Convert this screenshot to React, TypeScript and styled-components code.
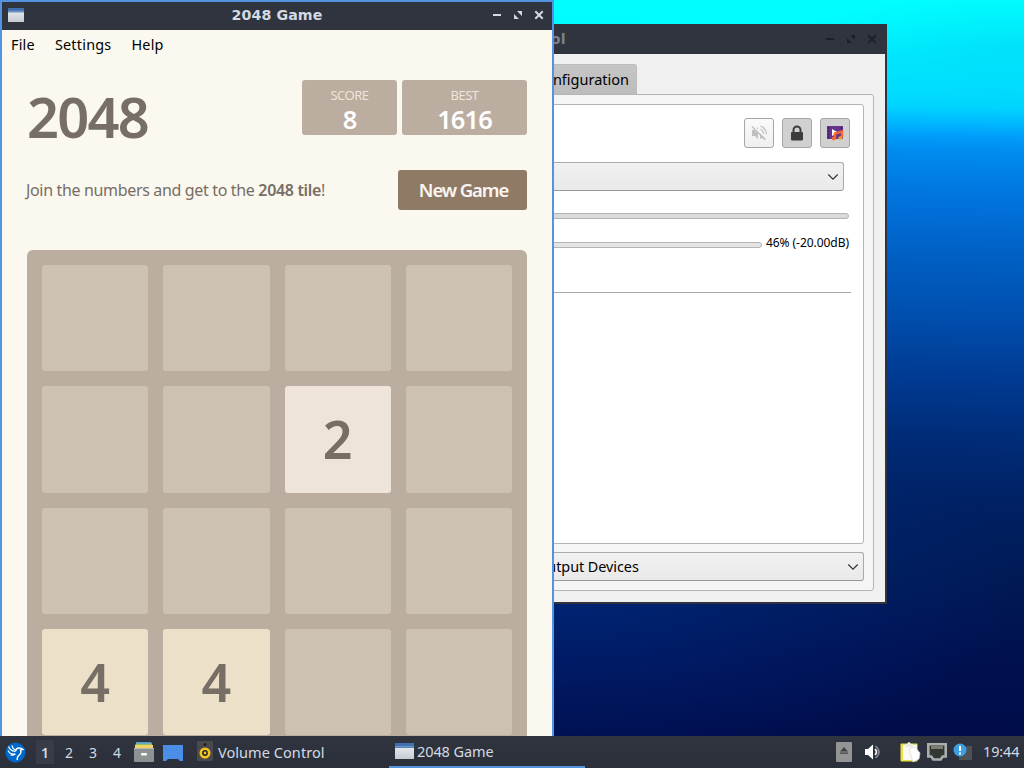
import styled, {createGlobalStyle} from "styled-components";

const GlobalStyle = createGlobalStyle`
    * {
        box-sizing: border-box;
    }

    body {
        margin: 0;
        overflow: hidden;
        font-family: "Noto Sans", "Open Sans", sans-serif;
    }
`;

const Screen = styled.div`
    width: 1024px;
    height: 768px;
    display: flex;
    flex-direction: column;
`;

const Desktop = styled.main`
    position: relative;
    flex: 1;
    min-height: 0;
    overflow: hidden;
    background:
        radial-gradient(ellipse 460px 190px at 560px 590px, rgba(0, 52, 150, 0.5), transparent),
        radial-gradient(ellipse 260px 60px at 1040px 50px, rgba(0, 205, 245, 0.5), transparent),
        linear-gradient(181deg, #00ffff 0, #00fcff 30px, #00eeff 56px, #00e2ff 84px, #00d4ff 108px, #00b8ff 124px,
            #009cfa 138px, #008cf0 152px, #0078e0 190px, #006cd4 222px, #0060c4 256px, #0050b0 312px, #003c94 374px,
            #002c78 438px, #002062 508px, #001a56 576px, #001050 660px, #000c4a 740px);
`;

const Window = styled.section<{$left: number, $top: number, $width: number, $height: number, $active?: boolean}>`
    position: absolute;
    left: ${({$left}) => $left}px;
    top: ${({$top}) => $top}px;
    width: ${({$width}) => $width}px;
    height: ${({$height}) => $height}px;
    display: flex;
    flex-direction: column;
    border: 2px solid ${({$active}) => $active ? "#5294e2" : "#2f343f"};
    background: ${({$active}) => $active ? "#faf8ef" : "#f0f0f0"};
`;

const TitleBar = styled.header<{$active?: boolean}>`
    flex: none;
    height: 28px;
    padding: 0 8px 2px 6px;
    display: grid;
    grid-template-columns: 60px 1fr 60px;
    align-items: center;
    background: #2f343f;
    color: ${({$active}) => $active ? "#d3dae3" : "#7c818c"};
`;

const Title = styled.h1`
    margin: 0;
    padding-left: 2px;
    text-align: center;
    font: bold 14.2px/26px "DejaVu Sans", sans-serif;
    letter-spacing: 0.1px;
    white-space: nowrap;
`;

const WindowButtons = styled.div`
    display: flex;
    justify-content: flex-end;
    gap: 11px;
`;

const MenuBar = styled.nav`
    display: flex;
    gap: 20px;
    height: 30px;
    padding-left: 9px;
    font-size: 14.4px;
    line-height: 30px;
    letter-spacing: 0.22px;
    color: #000;
`;

const Game = styled.div`
    padding: 20px 25px 0;
    color: #776e65;
`;

const Heading = styled.div`
    display: flex;
    justify-content: space-between;
    height: 90px;
`;

const Logo = styled.h2`
    margin: 0;
    font-size: 56px;
    font-weight: 600;
    line-height: 72px;
    letter-spacing: -1.8px;
`;

const Scores = styled.div`
    display: flex;
    align-items: flex-start;
    gap: 5px;
`;

const ScoreBox = styled.div<{$width: number}>`
    width: ${({$width}) => $width}px;
    height: 55px;
    padding-top: 7px;
    border-radius: 3px;
    background: #bbada0;
    text-align: center;
`;

const ScoreLabel = styled.div`
    color: #eee4da;
    font-size: 13px;
    line-height: 16px;
    letter-spacing: -0.5px;
`;

const ScoreValue = styled.div`
    color: #fff;
    font-size: 25.5px;
    font-weight: 600;
    line-height: 32px;
    letter-spacing: -0.9px;
`;

const Intro = styled.div`
    display: flex;
    justify-content: space-between;
    height: 80px;
    font-size: 16px;
    line-height: 40px;
    letter-spacing: -0.34px;

    p {
        margin: 0 0 0 -1px;
    }

    b {
        font-weight: 600;
    }
`;

const NewGame = styled.button`
    width: 129px;
    height: 40px;
    padding: 0 0 0 2px;
    border: 0;
    border-radius: 3px;
    background: #8f7a66;
    color: #f9f6f2;
    font: 600 18.5px/40px "Noto Sans", sans-serif;
    letter-spacing: -1.1px;
`;

const Board = styled.div`
    display: grid;
    grid-template-columns: repeat(4, 106.25px);
    grid-auto-rows: 106.25px;
    gap: 15px;
    width: 500px;
    height: 500px;
    padding: 15px;
    border-radius: 6px;
    background: #bbada0;
`;

const tileColors: Record<number, string> = {
    0: "#cdc1b4",
    2: "#eee4da",
    4: "#ede0c8",
};

const Tile = styled.div<{$value: number}>`
    border-radius: 3px;
    background: ${({$value}) => tileColors[$value]};
    font-size: 52px;
    font-weight: 600;
    line-height: 105px;
    text-align: center;
`;

const Mixer = styled.div`
    flex: 1;
    display: flex;
    flex-direction: column;
    padding: 10px 11px 11px;
    color: #000;
`;

const Tab = styled.div`
    align-self: flex-start;
    width: 118px;
    height: 30px;
    margin-left: 386px;
    padding-right: 7px;
    border: 1px solid #bcbcbc;
    border-bottom: 0;
    border-radius: 3px 3px 0 0;
    background: linear-gradient(#c6c6c6, #bcbcbc);
    font-size: 14.5px;
    line-height: 29px;
    text-align: right;
`;

const TabPage = styled.div`
    flex: 1;
    display: flex;
    flex-direction: column;
    gap: 8px;
    padding: 9px;
    border: 1px solid #b4b6b6;
    border-radius: 0 3px 3px 3px;
    background: #f5f5f5;
`;

const DeviceList = styled.div`
    flex: 1;
    padding: 13px 12px;
    border: 1px solid #b4b6b6;
    border-radius: 3px;
    background: #fff;
`;

const DeviceButtons = styled.div`
    display: flex;
    justify-content: flex-end;
    gap: 8px;
    padding-right: 1px;
`;

const DeviceButton = styled.button<{$pressed?: boolean}>`
    display: flex;
    align-items: center;
    justify-content: center;
    width: 30px;
    height: 30px;
    padding: 0;
    border: 1px solid #a6a6a6;
    border-radius: 3px;
    background: ${({$pressed}) => $pressed ? "#d0d0d0" : "linear-gradient(#fafafa, #efefef)"};
`;

const Combo = styled.div<{$inset?: boolean}>`
    display: flex;
    align-items: center;
    justify-content: space-between;
    height: 29px;
    margin: ${({$inset}) => $inset ? "14px 7px 0 0" : "0"};
    padding: 0 4px 0 372px;
    border: 1px solid #aaa;
    border-bottom-color: #989898;
    border-radius: 3px;
    background: linear-gradient(#f1f1f1, #e9e9e9);
    font-size: 14.4px;
    letter-spacing: -0.05px;
`;

const Slider = styled.div<{$low?: boolean}>`
    flex: 1;
    height: 6px;
    margin-top: ${({$low}) => $low ? 4 : 0}px;
    border: 1px solid #b4b4b4;
    border-radius: 3px;
    background: ${({$low}) => $low ? "#e4e4e4" : "#d9d9d9"};
`;

const SliderRow = styled.div<{$top: number}>`
    display: flex;
    align-items: center;
    gap: 4px;
    margin: ${({$top}) => $top}px 2px 0 0;
    font-size: 12px;
    line-height: 18px;
    letter-spacing: -0.05px;
`;

const Separator = styled.hr`
    height: 1px;
    margin: 40px 0 0;
    border: 0;
    background: #a9abab;
`;

const Panel = styled.footer`
    flex: none;
    display: flex;
    align-items: center;
    height: 32px;
    padding: 0 4px 0 5px;
    background: linear-gradient(#2f343f, #2a2f3a);
    color: #d3dae3;
    font-size: 14.5px;
    line-height: 32px;

    svg {
        flex: none;
    }
`;

const Workspaces = styled.div`
    display: flex;
    margin: 0 5px 0 10px;
`;

const Workspace = styled.div<{$current?: boolean}>`
    width: ${({$current}) => $current ? 18 : 24}px;
    height: 24px;
    margin-right: ${({$current}) => $current ? 3 : 0}px;
    background: ${({$current}) => $current ? "#383c48" : "transparent"};
    font-size: 14px;
    font-weight: ${({$current}) => $current ? 600 : 400};
    line-height: 25px;
    text-align: center;
`;

const Launchers = styled.div`
    display: flex;
    gap: 9px;
    margin-right: 13px;
`;

const Task = styled.div<{$active?: boolean}>`
    display: flex;
    align-items: center;
    gap: ${({$active}) => $active ? 3 : 5}px;
    width: ${({$active}) => $active ? 196 : 193}px;
    height: 32px;
    padding: 0 6px 0 ${({$active}) => $active ? 6 : 1}px;
    border-bottom: 2px solid ${({$active}) => $active ? "#5294e2" : "transparent"};

    span {
        padding-top: ${({$active}) => $active ? 0 : 2}px;
        letter-spacing: ${({$active}) => $active ? -0.1 : 0.06}px;
    }
`;

const Tray = styled.div`
    display: flex;
    align-items: center;
    gap: 6px;
    margin-left: auto;
`;

const TrayGroup = styled.div`
    display: flex;
    align-items: center;
    gap: 12px;
    margin-right: 12px;
`;

const Clock = styled.time`
    margin-left: 4px;
    width: 37px;
    white-space: nowrap;
    font-size: 14.4px;
    letter-spacing: -0.1px;
`;

const WindowIcon = ({width, height}: {width: number, height: number}) => (
    <svg width={width} height={height} viewBox="0 0 18 16" preserveAspectRatio="none">
        <defs>
            <linearGradient id="windowBody" x2="0" y2="1">
                <stop stopColor="#f1f2f4"/>
                <stop offset="1" stopColor="#c7cad2"/>
            </linearGradient>
        </defs>
        <rect width="18" height="16" fill="url(#windowBody)"/>
        <rect width="18" height="5" fill="#3f6fae"/>
        <rect y="3" width="18" height="1.5" fill="#6a96cc"/>
    </svg>
);

const Controls = ({color}: {color: string}) => (
    <WindowButtons>
        <svg width="10" height="10" viewBox="0 0 10 10"><path d="M1 5h8" stroke={color} strokeWidth="2"/></svg>
        <svg width="10" height="10" viewBox="0 0 10 10" fill={color}>
            <path d="M4 1h5v5zM1 4l5 5H1z"/>
        </svg>
        <svg width="10" height="10" viewBox="0 0 10 10"><path d="m1.3 1.3 7.4 7.4m0-7.4L1.3 8.7" stroke={color} strokeWidth="2"/></svg>
    </WindowButtons>
);

const Chevron = () => (
    <svg width="12" height="8" viewBox="0 0 12 8" fill="none" stroke="#333">
        <path d="m1.3 1.5 4.7 4.7 4.7-4.7" strokeWidth="1.2"/>
    </svg>
);

const MutedIcon = () => (
    <svg width="18" height="18" viewBox="0 0 18 18" fill="none" stroke="#c0c0c0">
        <path d="M2 6h3l3-3v12l-3-3H2z" fill="#c0c0c0" stroke="none"/>
        <path d="M10.5 5q3 1.5 3.3 5M10.5 2q5.5 2 6 8" strokeWidth="1.3"/>
        <path d="m2 1.5 14 14" stroke="#f5f5f5" strokeWidth="3"/>
        <path d="m2 2.5 13.5 13.5" strokeWidth="1.3"/>
        <path d="M10 9.5v5h5.5z" fill="#c0c0c0" stroke="none"/>
    </svg>
);

const LockIcon = () => (
    <svg width="14" height="16" viewBox="0 0 14 16">
        <path d="M3.5 8V5a3.5 3.5 0 0 1 7 0v3" fill="none" stroke="#3c3c3c" strokeWidth="2"/>
        <rect x="1" y="7" width="12" height="8.5" rx="1" fill="#3c3c3c"/>
    </svg>
);

const MediaIcon = () => (
    <svg width="18" height="16" viewBox="0 0 18 16">
        <rect x="1" y="1" width="16" height="13" fill="#66348e"/>
        <path d="M2.5 2v12M15.5 2v12" stroke="#3a1e5c" strokeWidth="1.4" strokeDasharray="2 1.2"/>
        <path d="m6 4 6 3.5L6 11z" fill="#fff"/>
        <path d="M9 13V8.5l7-2V12" fill="none" stroke="#f6682e" strokeWidth="2.4"/>
        <ellipse cx="7.8" cy="13.6" rx="2.2" ry="1.8" fill="#f6682e"/>
        <ellipse cx="14.4" cy="13" rx="2.2" ry="1.8" fill="#fb9a30"/>
    </svg>
);

const LubuntuIcon = () => (
    <svg width="21" height="21" viewBox="0 0 21 21">
        <circle cx="10.5" cy="10.5" r="10" fill="#0068c8"/>
        <path d="M3.5 4.5q1.5 4 6.5 5M3 8.5q2 4.2 7 3.4M5.5 13q2.5.8 5-1M7 3.5q.5 3.5 4 5" fill="none" stroke="#fff" strokeWidth="1.2"/>
        <path d="M10.5 9.5q.5-3.5 3.5-3.5 2.5 0 4 1.5l-2.4.3q1 3.6-1.4 5.2-2.2 1.5-2 5" fill="none" stroke="#fff" strokeWidth="1.4"/>
    </svg>
);

const FilesIcon = () => (
    <svg width="20" height="20" viewBox="0 0 20 20">
        <path d="M2 0h15l1 2H2z" fill="#4f9be6"/>
        <path d="M2 1.5h16v2H1z" fill="#91bd60"/>
        <path d="M1 3h18v4H1z" fill="#f1d365"/>
        <rect y="6" width="20" height="14" rx="1" fill="#8d9191"/>
        <rect y="6" width="20" height="1" fill="#b3b6b5"/>
        <rect x="7" y="11" width="6" height="2.5" rx="1" fill="#fff"/>
    </svg>
);

const ShowDesktopIcon = () => (
    <svg width="20" height="20" viewBox="0 0 20 20">
        <path d="M0 3h20v16h-3l-2-2H5l-2 2H0z" fill="#4a8ee8"/>
    </svg>
);

const SpeakerBoxIcon = () => (
    <svg width="16" height="20" viewBox="0 0 16 20">
        <rect width="16" height="20" rx="1" fill="#4a4a4c"/>
        <circle cx="8" cy="3.5" r="1.5" fill="#222"/>
        <circle cx="8" cy="12" r="4.2" fill="#222" stroke="#f3c51d" strokeWidth="2.6"/>
        <circle cx="8" cy="12" r="1.4" fill="#f3c51d"/>
    </svg>
);

const EjectIcon = () => (
    <svg width="16" height="20" viewBox="0 0 16 20">
        <rect width="16" height="20" rx="1" fill="#949494"/>
        <path d="m8 5 4 4.5H4zM4 10.5h8v1.2H4z" fill="#404347"/>
    </svg>
);

const SpeakerIcon = () => (
    <svg width="18" height="18" viewBox="0 0 18 18">
        <path d="M1 6h3l5-4.5v15L4 12H1z" fill="#fff"/>
        <path d="M11 6q3 3 0 6" fill="none" stroke="#fff" strokeWidth="1.6"/>
        <path d="M11.5 3q7 6 0 12" fill="none" stroke="#858a94" strokeWidth="1.6"/>
    </svg>
);

const ClipboardIcon = () => (
    <svg width="21" height="22" viewBox="0 0 21 22">
        <rect x=".5" y="2.5" width="17" height="18" rx="1" fill="#e8e04e"/>
        <path d="M3 4h14v15H3z" fill="#fafaf2"/>
        <path d="M5 3h2q2-4 4 0h2v3H5z" fill="#e9e9e3"/>
        <path d="m9 8 6-2 5 6-1 6-6 3-2-6z" fill="#fff" stroke="#d9d9d4" strokeWidth=".7"/>
    </svg>
);

const NetworkIcon = () => (
    <svg width="20" height="18" viewBox="0 0 20 18">
        <path d="M1.3 1.3h17.4v12.2h-3l-2 3H6.3l-2-3h-3z" fill="#343832" stroke="#aaaead" strokeWidth="2.6"/>
        <path d="M5 3v3m2-3v3m2-3v3m2-3v3m2-3v3m2-3v3" stroke="#c7c7ba"/>
    </svg>
);

const NotifyIcon = () => (
    <svg width="20" height="18" viewBox="0 0 20 18">
        <rect x="6" y="3" width="13" height="14" fill="#4c5256"/>
        <circle cx="7" cy="7" r="6.5" fill="#3e9fe0"/>
        <path d="M7 3v5M7 9.5v2" stroke="#fff" strokeWidth="2"/>
    </svg>
);

const tiles = [
    0, 0, 0, 0,
    0, 0, 2, 0,
    0, 0, 0, 0,
    4, 4, 0, 0,
];

const VolumeControl = () => (
    <Window $left={120} $top={24} $width={767} $height={580}>
        <TitleBar>
            <span/>
            <Title>Volume Control</Title>
            <Controls color="#1d2028"/>
        </TitleBar>
        <Mixer>
            <Tab>Configuration</Tab>
            <TabPage>
                <DeviceList>
                    <DeviceButtons>
                        <DeviceButton><MutedIcon/></DeviceButton>
                        <DeviceButton $pressed><LockIcon/></DeviceButton>
                        <DeviceButton $pressed><MediaIcon/></DeviceButton>
                    </DeviceButtons>
                    <Combo $inset>
                        <span/>
                        <Chevron/>
                    </Combo>
                    <SliderRow $top={22}><Slider/></SliderRow>
                    <SliderRow $top={15}><Slider $low/>46% (-20.00dB)</SliderRow>
                    <Separator/>
                </DeviceList>
                <Combo>
                    All Output Devices
                    <Chevron/>
                </Combo>
            </TabPage>
        </Mixer>
    </Window>
);

const Game2048 = () => (
    <Window $left={0} $top={0} $width={554} $height={780} $active>
        <TitleBar $active>
            <WindowIcon width={16} height={14}/>
            <Title>2048 Game</Title>
            <Controls color="#d3dae3"/>
        </TitleBar>
        <MenuBar>
            <span>File</span>
            <span>Settings</span>
            <span>Help</span>
        </MenuBar>
        <Game>
            <Heading>
                <Logo>2048</Logo>
                <Scores>
                    <ScoreBox $width={95}>
                        <ScoreLabel>SCORE</ScoreLabel>
                        <ScoreValue>8</ScoreValue>
                    </ScoreBox>
                    <ScoreBox $width={125}>
                        <ScoreLabel>BEST</ScoreLabel>
                        <ScoreValue>1616</ScoreValue>
                    </ScoreBox>
                </Scores>
            </Heading>
            <Intro>
                <p>Join the numbers and get to the <b>2048 tile</b>!</p>
                <NewGame>New Game</NewGame>
            </Intro>
            <Board>
                {tiles.map((value, index) => (
                    <Tile key={index} $value={value}>{value || ""}</Tile>
                ))}
            </Board>
        </Game>
    </Window>
);

const App = () => (
    <>
        <GlobalStyle/>
        <Screen>
            <Desktop>
                <VolumeControl/>
                <Game2048/>
            </Desktop>
            <Panel>
                <LubuntuIcon/>
                <Workspaces>
                    <Workspace $current>1</Workspace>
                    <Workspace>2</Workspace>
                    <Workspace>3</Workspace>
                    <Workspace>4</Workspace>
                </Workspaces>
                <Launchers>
                    <FilesIcon/>
                    <ShowDesktopIcon/>
                </Launchers>
                <Task>
                    <SpeakerBoxIcon/>
                    <span>Volume Control</span>
                </Task>
                <Task $active>
                    <WindowIcon width={19} height={16}/>
                    <span>2048 Game</span>
                </Task>
                <Tray>
                    <TrayGroup>
                        <EjectIcon/>
                        <SpeakerIcon/>
                    </TrayGroup>
                    <ClipboardIcon/>
                    <NetworkIcon/>
                    <NotifyIcon/>
                    <Clock>19:44</Clock>
                </Tray>
            </Panel>
        </Screen>
    </>
);

export default App;
